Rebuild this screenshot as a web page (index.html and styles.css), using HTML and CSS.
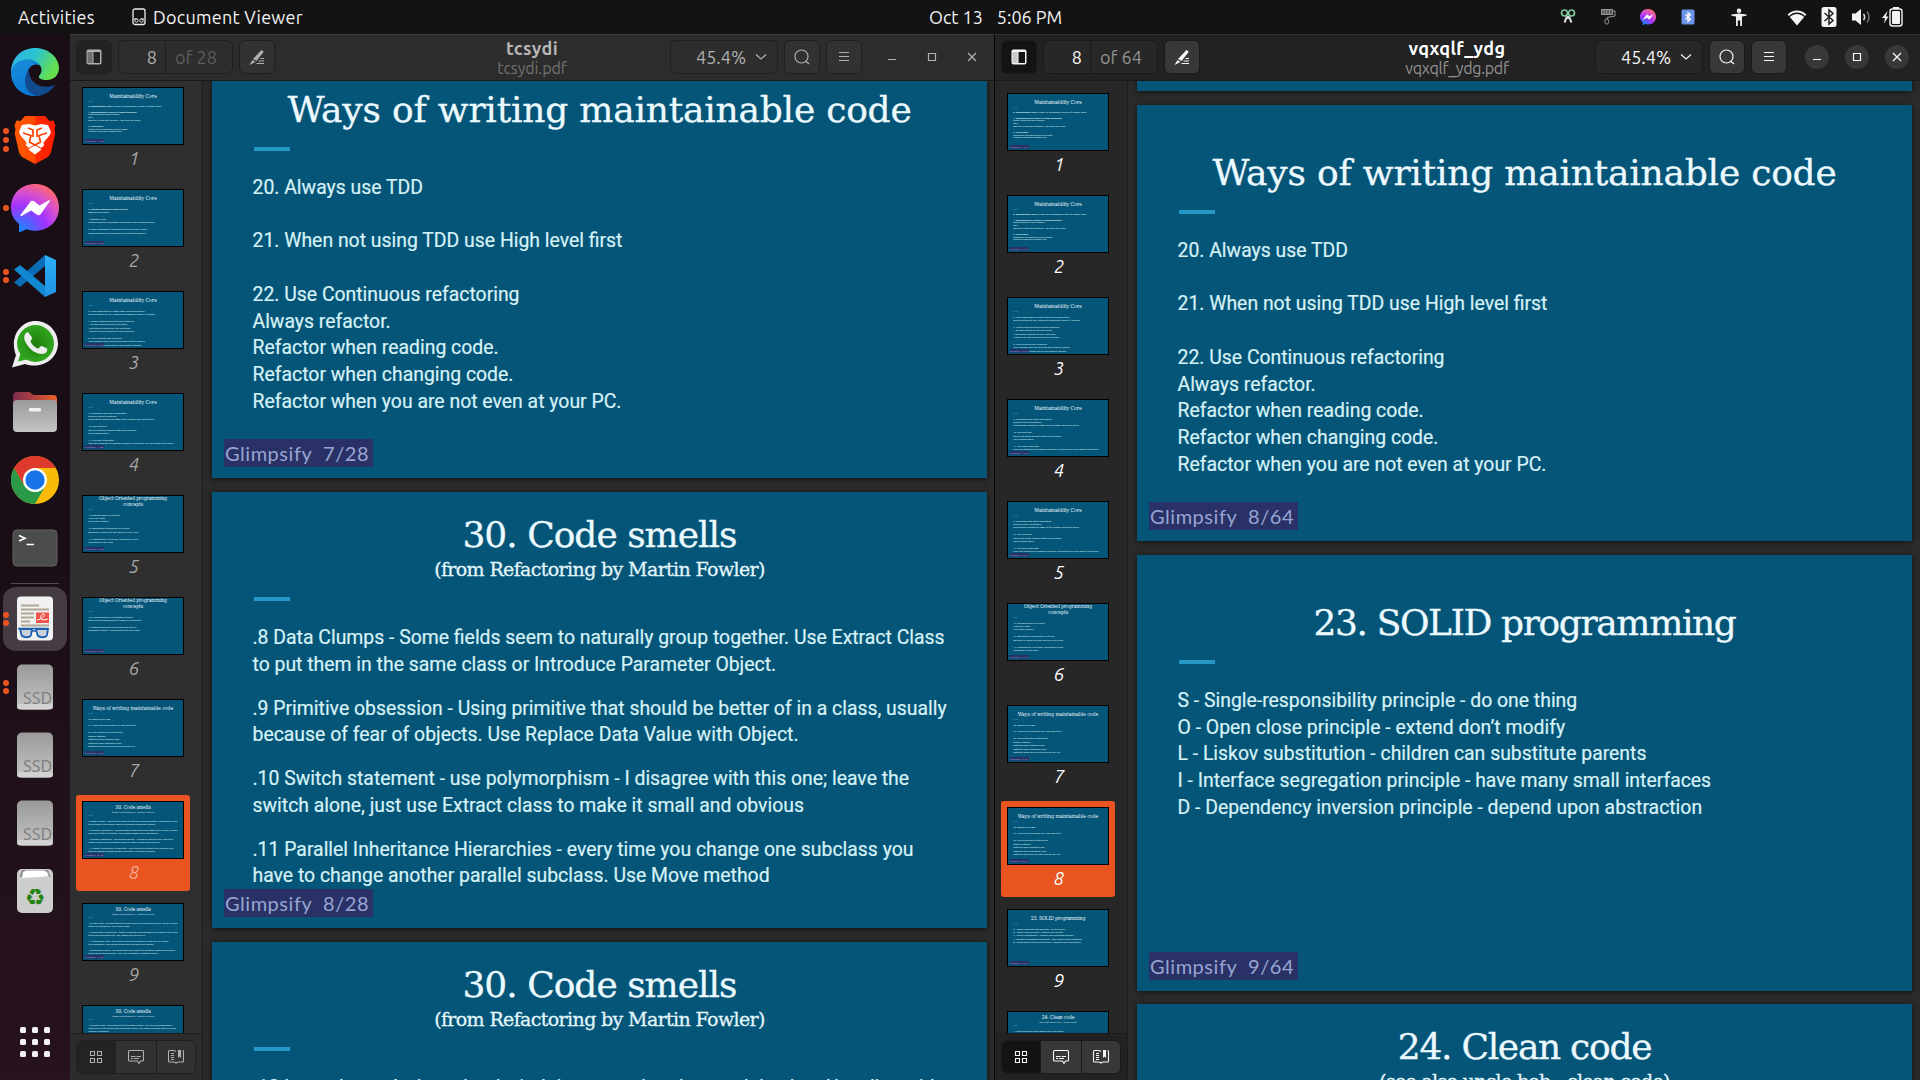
FILE: index.html
```html
<!DOCTYPE html>
<html lang="en">
<head>
<meta charset="utf-8">
<title>Document Viewer</title>
<link rel="stylesheet" href="styles.css">
</head>
<body>
<svg class="defs" aria-hidden="true">
  <defs>
    <linearGradient id="edgeTop" x1="0" y1="0" x2="1" y2="0.4"><stop offset="0" stop-color="#2fb3ea"/><stop offset=".5" stop-color="#2cc3d0"/><stop offset="1" stop-color="#64e04e"/></linearGradient>
    <linearGradient id="edgeLeft" x1="0" y1="0" x2=".4" y2="1"><stop offset="0" stop-color="#1b8fd8"/><stop offset="1" stop-color="#0a78d6"/></linearGradient>
    <linearGradient id="braveFill" x1="0" y1="0" x2="1" y2="0"><stop offset="0" stop-color="#ff5a00"/><stop offset=".5" stop-color="#ff4a00"/><stop offset=".52" stop-color="#ff2a00"/><stop offset="1" stop-color="#ff1a00"/></linearGradient>
    <radialGradient id="msgFill" cx=".2" cy="1" r="1.1"><stop offset="0" stop-color="#0a8dff"/><stop offset=".5" stop-color="#a033ff"/><stop offset=".75" stop-color="#d84fd0"/><stop offset="1" stop-color="#ff6a68"/></radialGradient>
    <linearGradient id="greyFill" x1="0" y1="0" x2="0" y2="1"><stop offset="0" stop-color="#9a9a9a"/><stop offset="1" stop-color="#c4c4c4"/></linearGradient>
    <linearGradient id="folderFill" x1="0" y1="0" x2="1" y2="0"><stop offset="0" stop-color="#7d2a50"/><stop offset="1" stop-color="#e8602c"/></linearGradient>
    <radialGradient id="waFill"><stop offset="0" stop-color="#1f7d0c"/><stop offset="1" stop-color="#31a61f"/></radialGradient>
    <linearGradient id="vsFill" x1="0" y1="0" x2="0" y2="1"><stop offset="0" stop-color="#2db0f5"/><stop offset="1" stop-color="#1f93e4"/></linearGradient>
  </defs>
  <symbol id="i-messenger" viewBox="0 0 48 48"><path fill="url(#msgFill)" d="M24 0C10 0 0 10 0 23.5c0 7.500 3 12.500 8 16.500v7.500c0 .5.8.8 1.300.500L15.500 45.200C18 46 21 46.800 24 46.800c14 0 24-10 24-23.300S38 0 24 0z"/><path fill="#fff" d="M9.500 31 19 18.200c1.200-1.700 3-1.800 4.400-.7l5.200 4.100 9.200-5.300c.8-.4 1.500.2 1 1L30 29.800c-1.200 1.700-3 1.900-4.400.8l-5.500-4.200-9.500 5.500c-.7.4-1.500-.2-1.100-.9z"/></symbol>
  <symbol id="i-ssd" viewBox="0 0 48 48"><rect x="6" y="1.500" width="36" height="45" rx="5" fill="url(#greyFill)"/><rect x="6" y="41" width="36" height="5.500" rx="3" fill="#d2d2d2"/><text x="26.500" y="40.500" text-anchor="middle" class="ssd-label">SSD</text></symbol>
  <symbol id="i-side" viewBox="0 0 18 18"><path fill="currentColor" fill-rule="evenodd" d="M3.500 1.500h11a2 2 0 0 1 2 2v11a2 2 0 0 1-2 2h-11a2 2 0 0 1-2-2v-11a2 2 0 0 1 2-2zM8.500 4v11h6.500V4z"/><path class="side-fill" d="M2.500 4h5v11h-5z"/></symbol>
  <symbol id="i-pen" viewBox="0 0 18 18"><path fill="currentColor" d="M13.500 2 15.800 3.800 8.500 13 5 11zM4.500 12l3 2-6 3z"/><path stroke="currentColor" stroke-width="1.200" d="M12.500 10.500H16M10.500 13H16M8.500 15.500H16"/></symbol>
  <symbol id="i-search" viewBox="0 0 18 18"><circle cx="8.500" cy="8.500" r="6.500" fill="none" stroke="currentColor" stroke-width="1.200"/><path d="m12.500 13 3.500 3" stroke="currentColor" stroke-width="1.300"/></symbol>
  <symbol id="i-menu" viewBox="0 0 18 18"><path d="M4 4.500h10M4 8.500h10M4 12.500h10" stroke="currentColor" stroke-width="1"/></symbol>
  <symbol id="i-min" viewBox="0 0 18 18"><path d="M5 11.500h8" stroke="currentColor" stroke-width="1"/></symbol>
  <symbol id="i-max" viewBox="0 0 18 18"><path d="M5.500 5.500h7v7h-7z" fill="none" stroke="currentColor" stroke-width="1.200"/></symbol>
  <symbol id="i-close" viewBox="0 0 18 18"><path d="m5 5 8 8m0-8-8 8" stroke="currentColor" stroke-width="1.300"/></symbol>
  <symbol id="i-down" viewBox="0 0 12 8"><path d="m1 1.500 5 4.500 5-4.500" fill="none" stroke="currentColor" stroke-width="1.200"/></symbol>
  <symbol id="i-grid" viewBox="0 0 18 18"><path d="M3.500 3.500h4v4h-4zM10.500 3.500h4v4h-4zM3.500 10.500h4v4h-4zM10.500 10.500h4v4h-4z" fill="none" stroke="currentColor" stroke-width="1.100"/></symbol>
  <symbol id="i-note" viewBox="0 0 18 18"><path d="M2.500 2.500h13a1 1 0 0 1 1 1v8.500a1 1 0 0 1-1 1h-2L12 15.500 10.500 13h-8a1 1 0 0 1-1-1V3.500a1 1 0 0 1 1-1z" fill="none" stroke="currentColor" stroke-width="1.100"/><path d="M4 8.500h4.500m1 0H14M4 10.500h2m1 0h5" stroke="currentColor"/></symbol>
  <symbol id="i-book" viewBox="0 0 18 18"><path d="M9 3.500c-1-1-2-1-3.500-1h-3a1 1 0 0 0-1 1v9.500a1 1 0 0 0 1 1h4c1.500 0 2 .5 2.500 1 .5-.5 1-1 2.500-1h4a1 1 0 0 0 1-1V3.500a1 1 0 0 0-1-1" fill="none" stroke="currentColor" stroke-width="1.100"/><path d="M4 5.500h3M4 7.500h3M4 9.500h3M4 11.500h3" stroke="currentColor"/><path d="M11 2h3v8l-1.500-1.500L11 10z" fill="currentColor"/></symbol>
</svg>

<header class="topbar">
  <span class="activities fit" data-w="77">Activities</span>
  <span class="app">
    <svg width="14" height="18" viewBox="0 0 14 18"><rect x="1" y="1" width="12" height="15.500" rx="2" fill="none" stroke="#eee" stroke-width="1.300"/><path d="M2 11h3m4 0h3" stroke="#eee"/><circle cx="4.500" cy="12.500" r="1.700" fill="none" stroke="#eee"/><circle cx="9.500" cy="12.500" r="1.700" fill="none" stroke="#eee"/></svg>
    <span class="fit" data-w="150">Document Viewer</span>
  </span>
  <span class="clock"><span class="fit" data-w="54">Oct 13</span><span class="fit" data-w="65">5:06 PM</span></span>
  <div class="tray">
    <svg class="t1" viewBox="0 0 24 24"><g fill="none" stroke="#7fc79b" stroke-width="1.700"><circle cx="8.500" cy="8" r="3"/><circle cx="15.500" cy="8" r="3"/></g><path d="m11 11.500-2.500 6M13 11.500l2.500 6M12 11v3" stroke="#d8d8d8" stroke-width="2"/></svg>
    <svg class="t2" viewBox="0 0 24 24"><rect x="5.500" y="4.500" width="11" height="5" fill="#555" stroke="#999"/><path d="M8 4.500v5m2.700-5v5m2.700-5v5M17 6h2v5L11 12.500v2" fill="none" stroke="#999"/><rect x="9" y="14" width="3.500" height="5" rx="1.500" fill="none" stroke="#999"/></svg>
    <svg class="t3" viewBox="0 0 24 24"><use href="#i-messenger" x="4" y="4" width="16" height="16"/></svg>
    <svg class="t4" viewBox="0 0 24 24"><rect x="5.500" y="4.500" width="13" height="15" rx="1.500" fill="#6b93ea"/><path d="m9.500 9.500 5 4.700-2.500 2.300V7.500l2.500 2.300-5 4.700" fill="none" stroke="#fff" stroke-width="1.200"/></svg>
    <svg class="t5" viewBox="0 0 24 24"><circle cx="12" cy="5.700" r="2.300" fill="#eee"/><path fill="#eee" d="M4.500 9.500 12 8.500l7.500 1v1.300l-4.500.8V21h-1.800v-5.500h-2.400V21H9v-9.400l-4.500-.8z"/></svg>
    <svg class="t6" viewBox="0 0 24 24"><path fill="#f4f4f4" d="M12 20.500 4.800 12c4.300-4 10.100-4 14.400 0z"/><path d="M3.300 10.300c5-5 12.400-5 17.400 0" fill="none" stroke="#f4f4f4" stroke-width="2"/></svg>
    <svg class="t7" viewBox="0 0 24 24"><rect x="4.500" y="2" width="15" height="20" rx="2.500" fill="#f4f4f4"/><path d="m7.500 8 8.500 7.500-4 3.500V5l4 3.500L7.500 16" fill="none" stroke="#222" stroke-width="1.500"/></svg>
    <svg class="t8" viewBox="0 0 24 24"><path fill="#f4f4f4" d="M3 8.500h3.500L12 4v16l-5.500-4.500H3z"/><path d="M14.500 9c1.500 2 1.500 4 0 6" fill="none" stroke="#ddd" stroke-width="1.600"/><path d="M18 6.500c2.500 3.500 2.500 7.500 0 11" fill="none" stroke="#777" stroke-width="1.500"/></svg>
    <svg class="t9" viewBox="0 0 24 24"><path fill="#f4f4f4" d="m6.500 6-5.500 7h3l-1 5.500 4.500-7H5z"/><rect x="9" y="4" width="12" height="17" rx="2.500" fill="none" stroke="#f4f4f4" stroke-width="1.400"/><rect x="11" y="6" width="8" height="13" rx="1" fill="#f4f4f4"/><path fill="#f4f4f4" d="M12 2h6v2h-6z"/></svg>
  </div>
</header>

<main class="desktop">
  <nav class="dock">
    <div class="slot"><svg viewBox="0 0 48 48"><path fill="url(#edgeLeft)" d="M0 22C2 14 8 10 15 10c10 0 16 6 17 10-2-3-5-3.500-7-3.500-5 0-9 5-9 11 0 10 9 18 17 18-3 2-6 2.500-9 2.500C10 48 0 37.500 0 25z"/><path fill="#114a8d" d="M18 22c-7 8-5 22 7 26 9 0 15-5 19.500-11.500-6 3-13 3-18.500 0-5-2.700-8-8-8-14.500z"/><path fill="url(#edgeTop)" d="M0 23C1 9 11 0 24 0c14 0 24 10 24 20 0 7-5 12-12 12-6 0-9-2-8-4 4-5 3-9-1-13C19 8 4 11 0 23z"/></svg></div>
    <div class="slot"><span class="dots"><i></i><i></i><i></i></span><svg viewBox="0 0 48 48"><path fill="url(#braveFill)" d="M14 0h20l4.500 5 4-.5 2 5-1 4 .8 4L40 36c-1 3-2 4-4 5.500L24 48l-12-6.500C10 40 9 39 8 36L3.700 17.500l.8-4-1-4 2-5 4 .5z"/><path fill="#fff" d="M24 9.500 30 8l7 1 3 7-1.500 3.500-6 7 .5 3-3 2.500-6-4-6 4-3-2.500.5-3-6-7L8 16l3-7 7-1z"/><path fill="#fff" d="m24 29 6.500 4.500L24 38.500l-6.500-5z"/><path d="m12 17 8 2.500L18.500 26l5.500 3 5.500-3-1.500-6.500 8-2.500M17 12l5 2v7M31 12l-5 2v7" fill="none" stroke="#ff4000" stroke-width="1.700"/></svg></div>
    <div class="slot"><span class="dots"><i></i></span><svg viewBox="0 0 48 48"><use href="#i-messenger"/></svg></div>
    <div class="slot"><span class="dots"><i></i><i></i></span><svg viewBox="0 0 48 48"><path fill="#0a6cb4" d="M3 30.500 34 3v11L9 35z"/><path fill="#1288d2" d="m9 13 25 21v11L3 17.500z"/><path fill="url(#vsFill)" d="M34 3 45 8v32l-11 5z"/></svg></div>
    <div class="slot"><svg viewBox="0 0 48 48"><path fill="#eee" d="M1 47.500 5 35C-2 18 9 1 24.500 1 37 1 47 11 47 23.500 47 38 32 50 14 44z"/><circle cx="24.500" cy="23.500" r="18.500" fill="url(#waFill)"/><path fill="#31a61f" d="m7 41.500 3-9 6 7z"/><path fill="#eee" d="M17 12c-4 1-5 6-2 11 4 7 10 11 16 11 4 0 6-3 5-5.500l-5-2.500c-2-.5-2.500 2.500-4 2.500-3-.5-7-5-7.500-7 0-1.500 2-2 1.500-4z"/></svg></div>
    <div class="slot"><svg viewBox="0 0 48 48"><path fill="url(#folderFill)" d="M2 8a4 4 0 0 1 4-4h12c2 0 3 3 5 3h19a4 4 0 0 1 4 4v12H2z"/><rect x="2" y="12" width="44" height="32" rx="4" fill="url(#greyFill)"/><rect x="18" y="20" width="12" height="3.500" rx="1" fill="#f2f2f2"/></svg></div>
    <div class="slot"><svg viewBox="0 0 48 48"><circle cx="24" cy="24" r="24" fill="#f9bb08"/><path fill="#2a9a48" d="M3.200 12A24 24 0 0 0 24 48l10.400-18H13.600z"/><path fill="#dd3a2d" d="M3.200 12A24 24 0 0 1 44.800 12H24L13.600 30z"/><circle cx="24" cy="24" r="12" fill="#fff"/><circle cx="24" cy="24" r="9.700" fill="#1a73e8"/></svg></div>
    <div class="slot"><svg viewBox="0 0 48 48"><rect x="2" y="6" width="44" height="36" rx="4" fill="#4c4c4c" stroke="#606060"/><path d="m8 11.500 6 2.800-6 2.800M15.500 20.500H23" fill="none" stroke="#fff" stroke-width="1.700"/></svg></div>
    <hr class="dock-rule">
    <div class="slot active"><span class="dots"><i></i><i></i></span><svg viewBox="0 0 48 48"><rect x="6" y="1.500" width="36" height="44" rx="4" fill="#f1f1f1"/><path d="M10 10.500h18M10 14.500h28M10 18.500h13M10 22.500h13M10 26.500h9M10 30.500h28" stroke="#b0a898" stroke-width="1.800"/><rect x="25" y="17.500" width="13" height="10.500" fill="#f05348"/><path d="M26 25c6-1 10-6 6-6-3 1-3 6 0 6l5-1" fill="none" stroke="#fff"/><g fill="#c9d2da" stroke="#1c5fae" stroke-width="1.800"><path d="M9 34h12l-1 6c-1 3-8 3-9.500 0zM25 34h12l-1 6c-1 3-8 3-9.500 0z"/></g><path d="M7 33.500h30M21 36h4" stroke="#1c5fae" stroke-width="1.500"/></svg></div>
    <div class="slot"><span class="dots"><i></i><i></i></span><svg viewBox="0 0 48 48"><use href="#i-ssd"/></svg></div>
    <div class="slot"><svg viewBox="0 0 48 48"><use href="#i-ssd"/></svg></div>
    <div class="slot"><svg viewBox="0 0 48 48"><use href="#i-ssd"/></svg></div>
    <div class="slot"><svg viewBox="0 0 48 48"><rect x="6" y="2" width="36" height="44" rx="5" fill="#cdcdcd"/><path fill="#8e8e8e" d="M11 3h26l2.500 7h-31z"/><path fill="#fff" d="m12 5 3-1.500h18L36 5l2 4.500-27 1.500z"/><text x="24" y="37.500" text-anchor="middle" class="recycle">♻</text></svg></div>
    <svg class="app-grid" viewBox="0 0 30 30"><g fill="#f2f2f2"><rect width="6" height="6" rx="1.500"/><rect x="12" width="6" height="6" rx="1.500"/><rect x="24" width="6" height="6" rx="1.500"/><rect y="12" width="6" height="6" rx="1.500"/><rect x="12" y="12" width="6" height="6" rx="1.500"/><rect x="24" y="12" width="6" height="6" rx="1.500"/><rect y="24" width="6" height="6" rx="1.500"/><rect x="12" y="24" width="6" height="6" rx="1.500"/><rect x="24" y="24" width="6" height="6" rx="1.500"/></g></svg>
  </nav>

  <section class="window inactive">
    <header class="bar">
      <span class="btn pressed"><svg><use href="#i-side"/></svg></span>
      <span class="entry"><b>8</b><span><span class="fit" data-w="42">of 28</span></span></span>
      <span class="btn"><svg><use href="#i-pen"/></svg></span>
      <span class="heading"><strong class="fit" data-w="52">tcsydi</strong><small class="fit" data-w="69">tcsydi.pdf</small></span>
      <span class="zoom"><span class="fit" data-w="50">45.4%</span><svg><use href="#i-down"/></svg></span>
      <span class="btn"><svg><use href="#i-search"/></svg></span>
      <span class="btn"><svg><use href="#i-menu"/></svg></span>
      <span class="controls"><i><svg><use href="#i-min"/></svg></i><i><svg><use href="#i-max"/></svg></i><i><svg><use href="#i-close"/></svg></i></span>
    </header>
    <div class="panes">
      <aside>
        <div class="thumbs" data-doc="a"></div>
        <div class="modes"><div><span class="on"><svg><use href="#i-grid"/></svg></span><span><svg><use href="#i-note"/></svg></span><span><svg><use href="#i-book"/></svg></span></div></div>
      </aside>
      <div class="view view-a" data-doc="a"></div>
    </div>
  </section>

  <section class="window focused">
    <header class="bar">
      <span class="btn pressed"><svg><use href="#i-side"/></svg></span>
      <span class="entry"><b>8</b><span><span class="fit" data-w="42">of 64</span></span></span>
      <span class="btn"><svg><use href="#i-pen"/></svg></span>
      <span class="heading"><strong class="fit" data-w="97">vqxqlf_ydg</strong><small class="fit" data-w="104">vqxqlf_ydg.pdf</small></span>
      <span class="zoom"><span class="fit" data-w="50">45.4%</span><svg><use href="#i-down"/></svg></span>
      <span class="btn"><svg><use href="#i-search"/></svg></span>
      <span class="btn"><svg><use href="#i-menu"/></svg></span>
      <span class="controls"><i><svg><use href="#i-min"/></svg></i><i><svg><use href="#i-max"/></svg></i><i><svg><use href="#i-close"/></svg></i></span>
    </header>
    <div class="panes">
      <aside>
        <div class="thumbs" data-doc="b"></div>
        <div class="modes"><div><span class="on"><svg><use href="#i-grid"/></svg></span><span><svg><use href="#i-note"/></svg></span><span><svg><use href="#i-book"/></svg></span></div></div>
      </aside>
      <div class="view view-b" data-doc="b"></div>
    </div>
  </section>
</main>
<script src="app.js"></script>
</body>
</html>
```
FILE: styles.css
```css
* { box-sizing: border-box; }
body { margin: 0; width: 1920px; height: 1080px; overflow: hidden; background: #1c0f17; font-family: Ubuntu, "Noto Sans", sans-serif; font-size: 18px; color: #f2f2f2; }
.defs { position: absolute; width: 0; height: 0; }
svg { display: block; flex: none; }
.fit { white-space: nowrap; display: inline-block; }

.topbar { height: 34px; background: #131313; display: grid; grid-template-columns: 132px 797px 1fr auto; align-items: center; line-height: 33px; }
.activities { margin-left: 18px; justify-self: start; }
.app { display: flex; align-items: center; gap: 7px; }
.clock { display: flex; gap: 14px; }
.tray { display: flex; align-items: center; padding-right: 15px; }
.tray svg { width: 24px; height: 24px; }
.t1, .t2, .t3 { margin-right: 16px; }
.t4 { margin-right: 27px; }
.t5 { margin-right: 34px; }
.t6, .t7, .t8 { margin-right: 8px; }

.desktop { display: grid; grid-template-columns: 70px 924px 926px; height: 1046px; }
.window + .window { border-left: 1px solid #080808; }

.dock { display: flex; flex-direction: column; align-items: center; padding-top: 6px; background: linear-gradient(#190e15 45%, #27121f); }
.slot { position: relative; width: 64px; height: 64px; margin-bottom: 4px; display: flex; align-items: center; justify-content: center; border-radius: 13px; flex: none; }
.slot > svg { width: 48px; height: 48px; }
.slot.active { background: #453b43; }
.dots { position: absolute; left: 0; top: 0; height: 64px; display: flex; flex-direction: column; justify-content: center; gap: 2.7px; }
.dots i { width: 6px; height: 6px; border-radius: 50%; background: #e95420; }
.dock-rule { width: 48px; height: 1px; margin: -1px 0 3px; border: 0; background: #504850; flex: none; }
.app-grid { width: 30px; height: 30px; margin: auto 0 23px; }
.ssd-label { font: 16px "Noto Sans", sans-serif; fill: #808080; }
.recycle { font: 23px "DejaVu Sans", sans-serif; fill: #23830f; }

.window { display: flex; flex-direction: column; height: 1046px; overflow: hidden; }
.inactive { --bar: #2c2c2c; --side: #2f2f2f; --btn: #323232; --press: #232323; --field: #2d2d2d; --line: #1f1f1f; --fg: #b0b0b0; --title: #b5b5b5; --sub: #717171; --dim: #5c5c5c; --top: #3a3a3a; --num: #a8a8a8; --sidefill: #707070; }
.focused { --bar: #222; --side: #272727; --btn: #383838; --press: #131313; --field: #272727; --line: #1a1a1a; --fg: #f7f7f7; --title: #fff; --sub: #919191; --dim: #919191; --top: #333; --num: #fff; --sidefill: #c9c9c9; }
.bar { height: 47px; flex: none; display: flex; align-items: center; padding: 0 0 1px 6px; background: var(--bar); border-top: 1px solid var(--top); border-bottom: 1px solid #191919; color: var(--fg); }
.side-fill { fill: var(--sidefill); }
.btn { width: 36px; height: 34px; flex: none; border: 1px solid var(--line); border-radius: 6px; background: var(--btn); display: flex; align-items: center; justify-content: center; }
.btn svg { width: 18px; height: 18px; }
.pressed { background: var(--press); }
.entry { width: 115px; height: 34px; margin: 0 6px; border: 1px solid var(--line); border-radius: 6px; background: var(--field); display: grid; grid-template-columns: 47px 1fr; line-height: 32px; }
.entry b { font-weight: 400; text-align: right; padding-right: 8px; border-right: 1px solid var(--line); }
.entry > span { padding-left: 9px; color: var(--dim); }
.heading { width: 395px; padding: 2px 0 0 119px; flex: none; display: grid; justify-items: center; line-height: 20px; }
.heading strong { color: var(--title); }
.heading small { font-size: 16px; color: var(--sub); }
.zoom { width: 108px; height: 34px; margin-right: 6px; border: 1px solid var(--line); border-radius: 6px; background: var(--field); display: flex; align-items: center; padding-left: 25px; gap: 9px; }
.zoom svg { width: 12px; height: 8px; }
.btn + .btn { margin-left: 6px; }
.controls { display: flex; gap: 16px; margin-left: 18px; }
.controls i { width: 24px; height: 24px; border-radius: 50%; display: flex; align-items: center; justify-content: center; }
.focused .controls i { background: #383838; }
.controls svg { width: 18px; height: 18px; }

.panes { flex: 1; min-height: 0; display: grid; grid-template-columns: 133px 1fr; }
aside { display: flex; flex-direction: column; min-height: 0; background: var(--side); border-right: 1px solid #1b1b1b; }
.thumbs { flex: 1; min-height: 0; overflow: hidden; display: flex; flex-direction: column; gap: 6px; padding-left: 6px; }
.focused .thumbs { padding-top: 6px; }
.item { width: 114px; height: 96px; flex: none; padding: 6px; border-radius: 3px; }
.item.current { background: #e95420; }
.item em { display: block; text-align: center; color: var(--num); font-size: 18px; line-height: 26px; padding-left: 2px; }
.inactive .current em { color: #f2a98f; }
.thumb { width: 102px; height: 58px; border: 1px solid #000; overflow: hidden; }
.thumb .slide { transform: scale(.129, .1285); transform-origin: 0 0; box-shadow: none; }
.thumb .text, .thumb .head { -webkit-text-stroke: 0; }
.modes { height: 47px; flex: none; padding: 6px; border-top: 1px solid #1b1b1b; background: var(--bar); color: var(--fg); }
.modes div { width: 120px; height: 34px; border: 1px solid var(--line); border-radius: 6px; overflow: hidden; display: grid; grid-template-columns: 39px 41px 38px; background: var(--btn); }
.modes span { display: flex; align-items: center; justify-content: center; border-right: 1px solid var(--line); }
.modes span:last-child { border: 0; }
.modes .on { background: var(--press); }
.modes svg { width: 18px; height: 18px; }

.view { min-width: 0; overflow: hidden; display: flex; flex-direction: column; gap: 14px; padding-left: 9px; background: #2b2b2b; }
.view-a .slide:first-child { margin-top: -39px; }
.view-b .slide:first-child { margin-top: -426px; }
.view-b .slide:last-child { margin-top: -1px; }

.slide { position: relative; width: 775px; height: 436px; flex: none; background: #055578; box-shadow: 0 1px 6px rgba(0, 0, 0, .6); color: #d6f2f6; font: 19.400px/26.700px Roboto, sans-serif; overflow: hidden; }
.head { height: 91px; padding-bottom: 1px; display: flex; flex-direction: column; align-items: center; justify-content: flex-end; font-family: "Roboto Slab", "DejaVu Serif", serif; -webkit-text-stroke: .3px currentColor; }
.head h1 { margin: 0; font-weight: 400; font-size: 36px; line-height: 45px; color: #ecfaff; }
.head p { margin: 0; font-size: 19px; line-height: 25px; color: #e2f6fb; }
.accent { width: 36px; height: 4px; margin: 14px 0 0 42px; background: #2497c4; }
.text { margin: 24px 0 0 40.500px; white-space: pre; -webkit-text-stroke: .2px currentColor; }
.text p { margin: 0 0 17.200px; }
.tight { line-height: 23px; }
.stamp { position: absolute; left: 12px; top: 397px; width: 149px; height: 28px; background: #293167; color: #98a5d2; font: 400 20px/29px Lato, sans-serif; padding-left: 1px; }
```
FILE: app.js
```js
const ways = {
  title: [["Ways of writing maintainable code", 624]],
  text: ["20. Always use TDD\n\n21. When not using TDD use High level first\n\n22. Use Continuous refactoring\nAlways refactor.\nRefactor when reading code.\nRefactor when changing code.\nRefactor when you are not even at your PC."]
};
const core = [["Maintainability Core", 367]];
const oop = [["Object Oriented programming", 527], ["concepts", 155]];
const smells = [["30. Code smells", 274]];
const fowler = ["(from Refactoring by Martin Fowler)", 331];

const core1 = { title: core, tight: true, text: ["<b>0. Maintainable code</b> is easy to understand, plenty of unitary tests.", "<b>1. Maintainability comes in small packages.</b>\nSmall functions and classes.\nDRY\nAim for 5 lines per function. 100 lines per class.", "<b>2. Indirection</b>\nReference something using a name\nreplace code with method call"] };
const core2 = { title: core, text: ["<b>3. Extract method and extract class</b>\nApplied indirection\n\n4. Beautify code\nReplace hard to understand code with a well named method\n\n5. Take advantage of naming things to express intent\nNaming things can be almost like using free speech"] };
const core3 = { title: core, text: ["6. Less parameters is better than more parameters\nDon't be afraid to use \"introduce parameter object\" if needed\n\n7. Single responsibility principle extended\n.1 A class should do only one thing\n.2 A function should do only one thing\n.3 A line of code should do only one thing\n\n8. Low coupling high cohesion\nYour classes don't like to know about other classes\nClasses should work only in one area of interest"] };
const core4 = { title: core, text: ["9. Command and query separation\nQueries return something\nCommands change the state of the system and don't return.\n\n10. Tell don't ask\nDon't look at the object's state from outside\nUse encapsulation\n\n11. The law of Demeter\nOnly call methods on available objects, not objects you can obtain from them."] };
const oop1 = { title: oop, text: ["12. Encapsulation is a friend\nHide your state\nUse smart objects.\n\n13. Abstraction (modeling) is a friend\nAbstract or model the real world in your code.\n\n14. composition is a friend, inheritance is not\nInheritance is too rigid"] };
const oop2 = { title: oop, text: ["15. Polymorphism is not always a friend\nDon't use polymorphism if it leads to complexity\n\n16. Data objects are a thing and they are ok\nAKA Data classes - classes that only hold data"] };
const smells8 = { title: smells, sub: fowler, text: [".8 Data Clumps - Some fields seem to naturally group together. Use Extract Class\nto put them in the same class or Introduce Parameter Object.", ".9 Primitive obsession - Using primitive that should be better of in a class, usually\nbecause of fear of objects. Use Replace Data Value with Object.", ".10 Switch statement - use polymorphism - I disagree with this one; leave the\nswitch alone, just use Extract class to make it small and obvious", ".11 Parallel Inheritance Hierarchies - every time you change one subclass you\nhave to change another parallel subclass. Use Move method"] };
const smells12 = { title: smells, sub: fowler, text: [".12 Lazy class - A class that isn't doing enough to be worth having. Usually a side\neffect of refactoring. Use Inline Class.", ".13 Speculative Generality - Makes complex generalizations to support use cases\nthat aren't requested yet. Use YAGNI and don't do it.", ".14 Temporary Field - an object in which an instance is set only in certain\ncircumstances. Use extract class and Introduce Null Object", ".15 Message chains - an object asks one object for another object and another\n(also called train wrecks). Use Hide delegate or Extract method"] };
const smells16 = { title: smells, sub: fowler, text: [".16 Middle man - The opposite of message chains. Too much encapsulation\nleads to a lot of middle men hiding the chain. Use Remove middle man or Inline\nmethod if possible"] };
const solid = { title: [["23. SOLID programming", 422]], text: ["S - Single-responsibility principle - do one thing\nO - Open close principle - extend don’t modify\nL - Liskov substitution - children can substitute parents\nI - Interface segregation principle - have many small interfaces\nD - Dependency inversion principle - depend upon abstraction"] };
const clean = { title: [["24. Clean code", 253]], sub: ["(see also uncle bob - clean code)", 291], text: [".1 Keep functions and classes very very small\nUse proper names\nAvoid comments"] };

const docs = {
  a: { total: 28, pages: [core1, core2, core3, core4, oop1, oop2, ways, smells8, smells12, smells16], view: [7, 8, 9] },
  b: { total: 64, pages: [core1, core1, core3, core4, core4, oop1, ways, ways, solid, clean], view: [7, 8, 9, 10] }
};

function slide(doc, n) {
  const s = doc.pages[n - 1];
  const fit = (tag, [t, w]) => `<${tag} class="fit" data-w="${w}">${t}</${tag}>`;
  return `<article class="slide"><div class="head">${s.title.map(t => fit("h1", t)).join("")}${s.sub ? fit("p", s.sub) : ""}</div>` +
    `<div class="accent"></div><div class="text${s.tight ? " tight" : ""}">${s.text.map(t => `<p>${t}</p>`).join("")}</div>` +
    `<div class="stamp"><span class="fit" data-w="144">Glimpsify&nbsp; ${n}/${doc.total}</span></div></article>`;
}

document.querySelectorAll(".thumbs").forEach(el => {
  const doc = docs[el.dataset.doc];
  el.innerHTML = doc.pages.map((p, i) => `<div class="item${i === 7 ? " current" : ""}"><div class="thumb">${slide(doc, i + 1)}</div><em>${i + 1}</em></div>`).join("");
});
document.querySelectorAll(".view").forEach(el => {
  const doc = docs[el.dataset.doc];
  el.innerHTML = doc.view.map(n => slide(doc, n)).join("");
});

// Track each label so that it fills the width set for it.
document.querySelectorAll(".fit").forEach(el => {
  el.style.letterSpacing = (el.dataset.w - el.offsetWidth) / el.textContent.length + "px";
});
```
